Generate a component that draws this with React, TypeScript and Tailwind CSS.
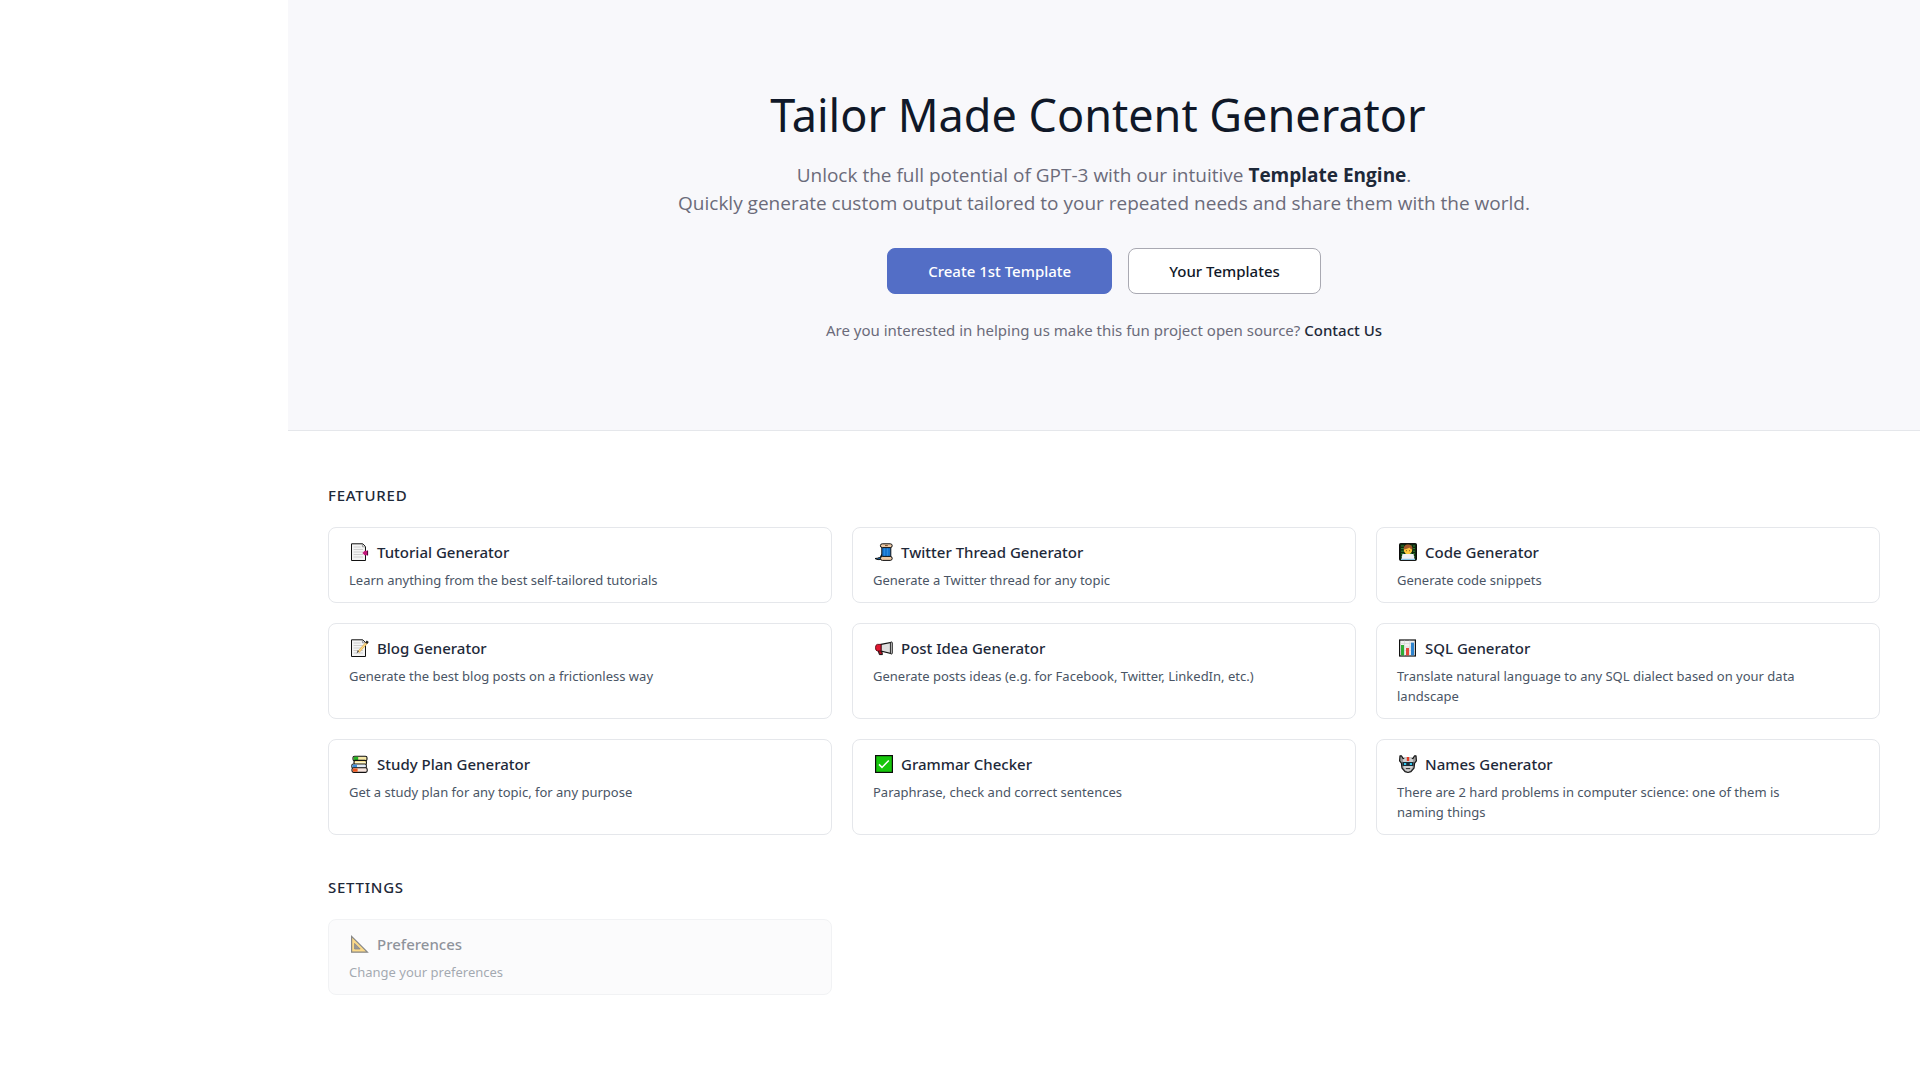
import type { ReactNode } from "react";

type CardProps = {
  icon: ReactNode;
  title: string;
  description: string;
  disabled?: boolean;
};

function Icon({ children }: { children: ReactNode }) {
  return (
    <svg viewBox="0 0 20 20" className="size-5 shrink-0" fill="none" aria-hidden="true">
      {children}
    </svg>
  );
}

function Page() {
  return (
    <>
      <path d="M2.5 1.8h11.2l2.8 2.8v13.9h-14z" fill="#f4f4f4" stroke="#111" strokeWidth="1" />
      <path d="M13.4 1.8v3h3" stroke="#777" strokeWidth="0.7" />
      <path d="M4.6 5h7M4.6 7.5h9.4M4.6 10h9.4M4.6 12.5h9.4M4.6 15h9.4" stroke="#c9c9c9" strokeWidth="0.9" />
    </>
  );
}

const icons = {
  bookmark: (
    <Icon>
      <Page />
      <path d="m13.4 11 2.2-2.2H19v4.4h-3.4z" fill="#c2187a" />
      <path d="M18.6 8.6v4.8" stroke="#4a0a35" strokeWidth="1" />
    </Icon>
  ),
  memo: (
    <Icon>
      <Page />
      <path d="M18.2 4.2 9.4 14" stroke="#d9a441" strokeWidth="2.4" />
      <path d="M18.2 4.2 9.4 14" stroke="#fbd98a" strokeWidth="1.4" />
      <path d="m16.2 4.4 1.6-1.9 2 1.6-1.7 2z" fill="#222" />
      <path d="m10 13.2-2.4 2.4 1.2-3.3z" fill="#333" />
    </Icon>
  ),
  books: (
    <Icon>
      <rect x="4" y="2.2" width="14" height="4.6" rx="1.6" fill="#f6e9a8" stroke="#111" strokeWidth="1.1" />
      <path d="M4.8 2.8h4.4v3.4H4.8z" fill="#24b324" />
      <rect x="5" y="6.4" width="12.4" height="4.2" rx="1.4" fill="#f7e08a" stroke="#111" strokeWidth="1.1" />
      <path d="M6 8.6h10.6" stroke="#fff6d0" strokeWidth="1.4" />
      <rect x="2.8" y="10" width="14.6" height="4.4" rx="1.6" fill="#e4edf5" stroke="#222" strokeWidth="1.1" />
      <path d="M3.6 12.2H8" stroke="#3d91dd" strokeWidth="3" />
      <rect x="3" y="13.8" width="15.2" height="4.6" rx="1.6" fill="#f5e3dc" stroke="#111" strokeWidth="1.1" />
      <path d="M3.8 14.5h4.8v3.2H3.8z" fill="#f0561d" />
    </Icon>
  ),
  thread: (
    <Icon>
      <path d="M8.5 12.5c-.5 3-3 3.8-6.5 4 2 1.6 6 1.4 7.6 0z" fill="#1269b5" stroke="#111" />
      <path d="M8.8 4h9v12h-9z" fill="#1675cf" stroke="#111" />
      <path d="M11.4 6v8M14.6 6v8" stroke="#3392e4" strokeWidth="0.8" />
      <rect x="7.4" y="1.8" width="11.8" height="3.8" rx="1.9" fill="#ecc9a5" stroke="#111" />
      <rect x="7.4" y="14.4" width="11.8" height="4" rx="2" fill="#ecc9a5" stroke="#111" />
      <path d="M12 3.6h2.8" stroke="#7a4c28" />
    </Icon>
  ),
  megaphone: (
    <Icon>
      <path d="m5 12 1.4 4.6h3L8.600 12z" fill="#b50f22" stroke="#111" />
      <path d="M8 6.400 18 4.400v11.200L8 13z" fill="#dedede" stroke="#111" strokeWidth="1.1" />
      <path d="M8 6.400H4.400Q2.500 6.600 2.500 9.700T4.400 13H8z" fill="#e01730" stroke="#5a0711" strokeWidth="0.9" />
      <rect x="17.4" y="4" width="2" height="12" rx="1" fill="#bbb" stroke="#111" strokeWidth="0.8" />
    </Icon>
  ),
  check: (
    <Icon>
      <rect x="2.6" y="1.6" width="16.8" height="16.8" fill="#16c60c" stroke="#0b0b0b" strokeWidth="1.2" />
      <path d="m6 10.4 3 3 6.8-7" stroke="#fff" strokeWidth="1.5" />
    </Icon>
  ),
  coder: (
    <Icon>
      <rect x="2.5" y="1.6" width="17" height="16.8" rx="0.8" fill="#10260f" stroke="#0b0b0b" />
      <path d="M4 4h14M4 6.6h14M4 9.2h14M4 11.8h14M4 14.4h14" stroke="#2f8a34" strokeDasharray="3 1" />
      <circle cx="11" cy="8" r="4.2" fill="#ffc83d" />
      <path d="M6.7 7.6C6.5 3.8 8.6 2.3 11.2 2.4c3 .1 4.7 2 4.2 5.200-1.600-.3-2.400-1-3-2-1.200 1.300-3.600 1.500-5.700 2z" fill="#a4592c" />
      <path d="M9.4 8.2v1M12.6 8.2v1" stroke="#54330b" strokeWidth="0.8" />
      <path d="M5.4 12h11.200l1 5.400H4.400z" fill="#f1f1f6" />
      <path d="M4 17.400h14" stroke="#8cc4e4" strokeWidth="1.2" />
    </Icon>
  ),
  chart: (
    <Icon>
      <rect x="2.6" y="2" width="15.8" height="16" fill="#f0f0f0" stroke="#111" strokeWidth="1.2" />
      <path d="M3.2 5.5h14.6M3.2 9h14.6M3.2 12.5h14.6M7.5 2.6v14.8M12.8 2.6v14.8" stroke="#d5d5d5" strokeWidth="0.7" />
      <path d="M4 7h3v10.4H4z" fill="#2fae35" />
      <path d="M9 10h3v7.4H9z" fill="#e5483c" />
      <path d="M14 4.6h3v12.8h-3z" fill="#2e84cf" />
    </Icon>
  ),
  robot: (
    <Icon>
      <path
        d="M3 1.800h1.400L6 4.400h10l1.600-2.600H19l.4 5-1.800 2.400-.6 5-3 3.400-3 .9-3-.9-3-3.400-.6-5-1.800-2.400z"
        fill="#9b9b9b"
        stroke="#161616"
        strokeWidth="1.2"
        strokeLinejoin="round"
      />
      <path d="M6 6 8 3.400h6L16 6l-.6 7.600-2 3-2.400.9-2.400-.9-2-3z" fill="#d0d0d0" />
      <path d="M9.800 3h2.400v4H9.800z" fill="#e43b26" />
      <path d="M5.400 8h11.200v4H5.400z" fill="#1c2c36" />
      <path d="M7 10h2.200M12.800 10H15" stroke="#31c8ee" strokeWidth="2" />
      <path d="M8.800 14.600h4.400" stroke="#333" strokeWidth="1.1" />
    </Icon>
  ),
  ruler: (
    <Icon>
      <path d="M2.6 2.4v15.8h15.8z" fill="#fbb716" stroke="#111" strokeWidth="1.2" />
      <path d="M5.600 9.400v5.600h5.600z" fill="#333" stroke="#111" strokeWidth="0.8" />
    </Icon>
  ),
};

const featured: CardProps[] = [
  { icon: icons.bookmark, title: "Tutorial Generator", description: "Learn anything from the best self-tailored tutorials" },
  { icon: icons.thread, title: "Twitter Thread Generator", description: "Generate a Twitter thread for any topic" },
  { icon: icons.coder, title: "Code Generator", description: "Generate code snippets" },
  { icon: icons.memo, title: "Blog Generator", description: "Generate the best blog posts on a frictionless way" },
  { icon: icons.megaphone, title: "Post Idea Generator", description: "Generate posts ideas (e.g. for Facebook, Twitter, LinkedIn, etc.)" },
  { icon: icons.chart, title: "SQL Generator", description: "Translate natural language to any SQL dialect based on your data landscape" },
  { icon: icons.books, title: "Study Plan Generator", description: "Get a study plan for any topic, for any purpose" },
  { icon: icons.check, title: "Grammar Checker", description: "Paraphrase, check and correct sentences" },
  { icon: icons.robot, title: "Names Generator", description: "There are 2 hard problems in computer science: one of them is naming things" },
];

const settings: CardProps[] = [
  { icon: icons.ruler, title: "Preferences", description: "Change your preferences", disabled: true },
];

function Card({ icon, title, description, disabled }: CardProps) {
  return (
    <a
      href={disabled ? undefined : "#"}
      aria-disabled={disabled}
      className={
        disabled
          ? "block rounded-lg border border-gray-200 bg-gray-100/60 px-5 py-3 opacity-50"
          : "block rounded-lg border border-gray-200 bg-white px-5 py-3 hover:border-gray-300"
      }
    >
      <h3 className="flex items-center gap-2 text-[15px] leading-6 font-medium text-gray-800">
        {icon}
        {title}
      </h3>
      <p className="mt-[6px] pr-10 text-[13px] leading-5 text-gray-600">{description}</p>
    </a>
  );
}

function Section({ title, cards }: { title: string; cards: CardProps[] }) {
  return (
    <section>
      <h2 className="text-[15px] leading-6 font-medium tracking-wider text-gray-800 uppercase">{title}</h2>
      <div className="mt-5 grid grid-cols-1 gap-5 md:grid-cols-2 xl:grid-cols-3">
        {cards.map((card) => (
          <Card key={card.title} {...card} />
        ))}
      </div>
    </section>
  );
}

export default function App() {
  return (
    <div className="flex min-h-screen bg-white font-['Noto_Sans','Open_Sans',sans-serif]">
      <aside className="w-72 shrink-0" />
      <main className="min-w-0 flex-1">
        <div className="flex flex-col items-center border-b border-gray-200 bg-[#f8f8fb] px-10 pt-[81px] pb-[88px] text-center">
          <h1 className="pr-3 text-[45px] leading-[68px] text-gray-900">Tailor Made Content Generator</h1>
          <p className="mt-3 font-['Open_Sans','Noto_Sans',sans-serif] text-[19px] leading-7 text-[#6b6b7a]">
            Unlock the full potential of GPT-3 with our intuitive{" "}
            <strong className="font-bold text-gray-800">Template Engine</strong>.
            <br />
            Quickly generate custom output tailored to your repeated needs and share them with the world.
          </p>
          <div className="mt-[31px] flex gap-4">
            <button
              type="button"
              className="h-[46px] rounded-lg border border-[#536ec6] bg-[#536ec6] px-10 text-[15px] font-medium text-white"
            >
              Create 1st Template
            </button>
            <button
              type="button"
              className="h-[46px] rounded-lg border border-[#a9a9b2] bg-white px-10 text-[15px] font-medium text-gray-900"
            >
              Your Templates
            </button>
          </div>
          <p className="mt-6 text-[15px] leading-6 text-[#6b6b7a]">
            Are you interested in helping us make this fun project open source?{" "}
            <a href="#" className="font-medium text-gray-800">
              Contact Us
            </a>
          </p>
        </div>

        <div className="flex flex-col gap-10 px-10 pt-[52px] pb-10">
          <Section title="Featured" cards={featured} />
          <Section title="Settings" cards={settings} />
        </div>
      </main>
    </div>
  );
}
